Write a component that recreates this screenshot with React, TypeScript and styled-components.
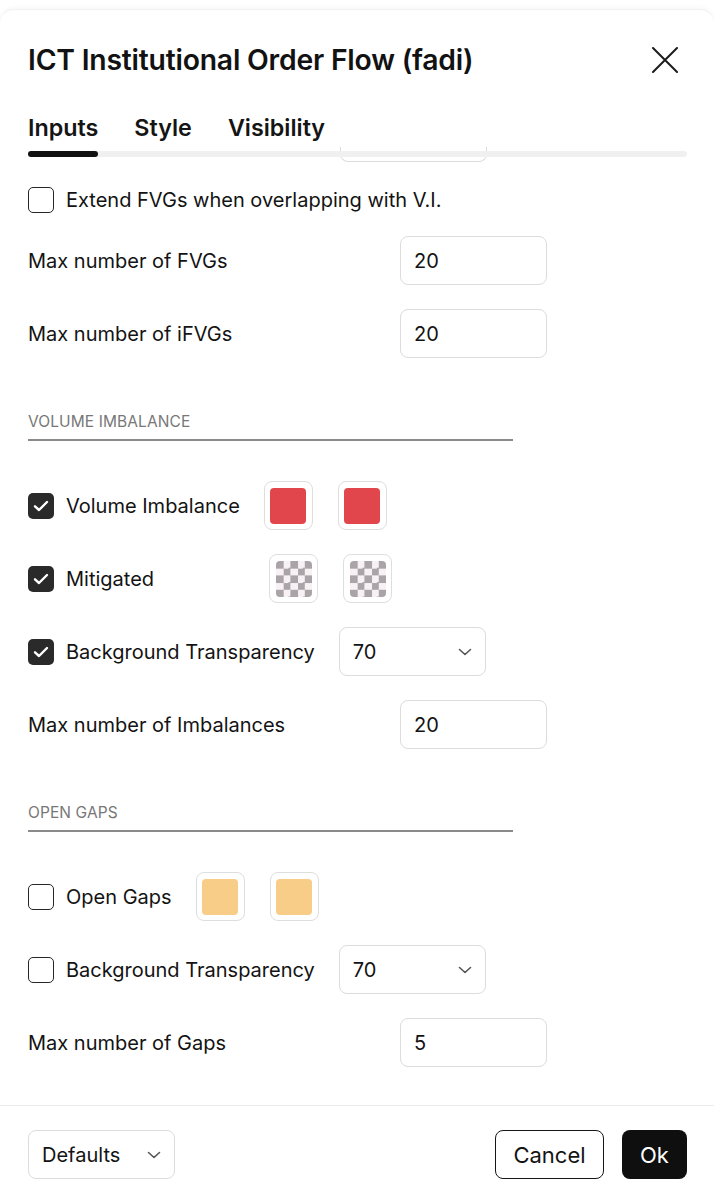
import styled, { createGlobalStyle } from 'styled-components'

const GlobalStyle = createGlobalStyle`
  html, body {
    margin: 0;
    padding: 0;
    background: #ffffff;
  }
  body {
    font-family: Inter, 'Liberation Sans', sans-serif;
    color: #131313;
    -webkit-font-smoothing: antialiased;
  }
`

function Chevron() {
  return (
    <svg width="14" height="8" viewBox="0 0 14 8" fill="none">
      <path d="M1.5 1.5 L7 6.5 L12.5 1.5" stroke="#555" strokeWidth="1.6" strokeLinecap="round" strokeLinejoin="round" />
    </svg>
  )
}

function Check() {
  return (
    <svg width="16" height="12" viewBox="0 0 16 12" fill="none">
      <path d="M2 6.3 L6 10 L14 2" stroke="#fff" strokeWidth="2.4" strokeLinecap="round" strokeLinejoin="round" />
    </svg>
  )
}

function CheckBox({ checked }: { checked?: boolean }) {
  return <Box checked={!!checked}>{checked && <Check />}</Box>
}

function Select({ value, width }: { value: string; width?: number }) {
  return (
    <SelectBox $width={width}>
      <span>{value}</span>
      <Chevron />
    </SelectBox>
  )
}

function Swatch({ color }: { color?: string }) {
  return (
    <SwatchFrame>
      {color ? <SwatchFill style={{ background: color }} /> : <Checker />}
    </SwatchFrame>
  )
}

function NumberRow({ label, value }: { label: string; value: string }) {
  return (
    <Row>
      <FieldLabel>{label}</FieldLabel>
      <NumberInput>{value}</NumberInput>
    </Row>
  )
}

export default function App() {
  return (
    <>
      <GlobalStyle />
      <Card>
        <Header>
          <Title>ICT Institutional Order Flow (fadi)</Title>
          <CloseButton>
            <svg width="26" height="26" viewBox="0 0 26 26">
              <path d="M1 1 L25 25 M25 1 L1 25" stroke="#1c1c1c" strokeWidth="2" strokeLinecap="round" />
            </svg>
          </CloseButton>
        </Header>

        <Tabs>
          <Tab active>Inputs</Tab>
          <Tab>Style</Tab>
          <Tab>Visibility</Tab>
        </Tabs>
        <TabTrack>
          <Indicator />
        </TabTrack>

        <Content>
          <PeekField />

          <Row tight>
            <CheckBox />
            <CheckLabel>Extend FVGs when overlapping with V.I.</CheckLabel>
          </Row>
          <NumberRow label="Max number of FVGs" value="20" />
          <NumberRow label="Max number of iFVGs" value="20" />

          <SectionTitle>Volume Imbalance</SectionTitle>

          <Row>
            <CheckBox checked />
            <CheckLabel>Volume Imbalance</CheckLabel>
            <Swatches>
              <Swatch color="#e1464d" />
              <Swatch color="#e1464d" />
            </Swatches>
          </Row>
          <Row>
            <CheckBox checked />
            <CheckLabel $minWidth={179}>Mitigated</CheckLabel>
            <Swatches>
              <Swatch />
              <Swatch />
            </Swatches>
          </Row>
          <Row>
            <CheckBox checked />
            <CheckLabel>Background Transparency</CheckLabel>
            <Select value="70" />
          </Row>
          <NumberRow label="Max number of Imbalances" value="20" />

          <SectionTitle>Open Gaps</SectionTitle>

          <Row>
            <CheckBox />
            <CheckLabel>Open Gaps</CheckLabel>
            <Swatches>
              <Swatch color="#f7cd88" />
              <Swatch color="#f7cd88" />
            </Swatches>
          </Row>
          <Row>
            <CheckBox />
            <CheckLabel>Background Transparency</CheckLabel>
            <Select value="70" />
          </Row>
          <NumberRow label="Max number of Gaps" value="5" />
        </Content>

        <Footer>
          <Select value="Defaults" />
          <Actions>
            <CancelButton>Cancel</CancelButton>
            <OkButton>Ok</OkButton>
          </Actions>
        </Footer>
      </Card>
    </>
  )
}

const Card = styled.div`
  margin-top: 9px;
  background: #fff;
  border-radius: 14px 14px 0 0;
  box-shadow: 0 -2px 4px rgba(0, 0, 0, 0.03);
  border-top: 1px solid #f1f1f1;
  height: 1189px;
  display: flex;
  flex-direction: column;
  overflow: hidden;
`

const Header = styled.div`
  display: flex;
  align-items: center;
  justify-content: space-between;
  padding: 33px 36px 0 28px;
  height: 34px;
`

const Title = styled.h1`
  margin: 0;
  font-size: 28.3px;
  font-weight: 600;
  letter-spacing: -0.2px;
  line-height: 34px;
  color: #121212;
`

const CloseButton = styled.div`
  width: 26px;
  height: 26px;
  display: flex;
`

const Tabs = styled.div`
  display: flex;
  gap: 36px;
  padding: 0 28px;
  margin-top: 37px;
`

const Tab = styled.div<{ active?: boolean }>`
  font-size: 23.3px;
  font-weight: 600;
  line-height: 28px;
  color: #151515;
`

const TabTrack = styled.div`
  margin: 9px 27px 0 28px;
  height: 6px;
  border-radius: 3px;
  background: #f0f0f0;
  position: relative;
  z-index: 1;
`

const Indicator = styled.div`
  width: 70px;
  height: 6px;
  border-radius: 3px;
  background: #111;
`

const Content = styled.div`
  display: flex;
  flex-direction: column;
  gap: 24px;
  padding: 0 28px;
  flex: 1;
`

const PeekField = styled.div`
  margin: -10px 0 -11px 312px;
  width: 145px;
  height: 14px;
  border: 1px solid #dcdcdc;
  border-top: none;
  border-radius: 0 0 8px 8px;
`

const Row = styled.div<{ tight?: boolean }>`
  display: flex;
  align-items: center;
  height: 49px;
  margin-bottom: ${(p) => (p.tight ? '-12px' : '0')};
`

const Box = styled.div<{ checked: boolean }>`
  box-sizing: border-box;
  width: 26px;
  height: 26px;
  border-radius: 5px;
  flex-shrink: 0;
  display: flex;
  align-items: center;
  justify-content: center;
  border: ${(p) => (p.checked ? 'none' : '1.5px solid #262626')};
  background: ${(p) => (p.checked ? '#2a2a2a' : '#fff')};
`

const CheckLabel = styled.span<{ $minWidth?: number }>`
  margin-left: 12px;
  margin-right: 24px;
  font-size: 20px;
  min-width: ${(p) => (p.$minWidth ? `${p.$minWidth}px` : 'auto')};
  white-space: nowrap;
`

const FieldLabel = styled.span`
  width: 372px;
  font-size: 20px;
  white-space: nowrap;
`

const NumberInput = styled.div`
  box-sizing: border-box;
  width: 147px;
  height: 49px;
  border: 1px solid #dcdcdc;
  border-radius: 8px;
  padding-left: 13px;
  display: flex;
  align-items: center;
  font-size: 20px;
`

const SelectBox = styled.div<{ $width?: number }>`
  box-sizing: border-box;
  width: ${(p) => p.$width ?? 147}px;
  height: 49px;
  border: 1px solid #dcdcdc;
  border-radius: 8px;
  padding: 0 13px;
  display: flex;
  align-items: center;
  justify-content: space-between;
  font-size: 20px;
`

const Swatches = styled.div`
  display: flex;
  gap: 25px;
`

const SwatchFrame = styled.div`
  box-sizing: border-box;
  width: 49px;
  height: 49px;
  border: 1px solid #dedede;
  border-radius: 8px;
  display: flex;
  align-items: center;
  justify-content: center;
`

const SwatchFill = styled.div`
  width: 36px;
  height: 36px;
  border-radius: 4px;
`

const Checker = styled.div`
  width: 36px;
  height: 36px;
  border-radius: 4px;
  background-color: #f8f1f3;
  background-image: conic-gradient(transparent 0 25%, #aaa3a8 0 50%, transparent 0 75%, #aaa3a8 0);
  background-size: 14.4px 14.4px;
  background-position: 0 0;
`

const SectionTitle = styled.div`
  width: 485px;
  margin-top: 31px;
  margin-bottom: 16px;
  padding-bottom: 8px;
  border-bottom: 2px solid #8a8a8a;
  font-size: 15.5px;
  line-height: 18px;
  text-transform: uppercase;
  color: #777;
  letter-spacing: 0.1px;
`

const Footer = styled.div`
  border-top: 1px solid #ebebeb;
  padding: 24px 27px 20px 28px;
  display: flex;
  align-items: center;
  justify-content: space-between;
`

const Actions = styled.div`
  display: flex;
  gap: 18px;
`

const CancelButton = styled.div`
  box-sizing: border-box;
  width: 109px;
  height: 49px;
  border: 1.5px solid #161616;
  border-radius: 8px;
  display: flex;
  align-items: center;
  justify-content: center;
  font-size: 22px;
`

const OkButton = styled.div`
  width: 65px;
  height: 49px;
  border-radius: 8px;
  background: #0f0f0f;
  color: #fff;
  display: flex;
  align-items: center;
  justify-content: center;
  font-size: 22px;
`
